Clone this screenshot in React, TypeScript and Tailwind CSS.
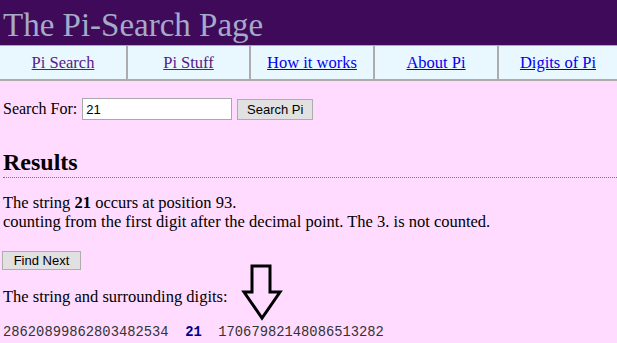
const navLinks = [
  { label: 'Pi Search', visited: true },
  { label: 'Pi Stuff', visited: true },
  { label: 'How it works', visited: false },
  { label: 'About Pi', visited: false },
  { label: 'Digits of Pi', visited: false },
]

const DownArrow = () => (
  <svg
    className="absolute left-[241px] top-[263px]"
    width="42"
    height="58"
    viewBox="0 0 42 58"
    fill="none"
    stroke="black"
    strokeWidth="3"
    strokeLinejoin="miter"
  >
    <path d="M11 3 H29 V29 H39 L21 55 L3 29 H11 Z" />
  </svg>
)

export default function App() {
  return (
    <div className="relative min-h-screen bg-[#ffdcff] font-['Liberation_Serif',serif] text-black">
      <h1 className="h-[45px] bg-[#3f0a59] pl-[3px] pt-[9px] text-[33px] leading-[32px] text-[#a3abc9]">
        The Pi-Search Page
      </h1>

      <nav className="grid h-[36px] grid-cols-[126px_123px_124px_124px_1fr] border-t border-b-2 border-[#acacac] bg-[#e9f7fe]">
        {navLinks.map((link, idx) => (
          <div
            key={link.label}
            className={`flex items-center justify-center pt-[1px] ${idx > 0 ? 'border-l-2 border-[#acacac]' : ''}`}
          >
            <a
              href="#"
              className={`text-[16.5px] underline ${link.visited ? 'text-[#551a8b]' : 'text-[#0000ee]'}`}
            >
              {link.label}
            </a>
          </div>
        ))}
      </nav>

      <div className="pl-[3px]">
        <div className="mt-[17px] flex h-[22px] items-center gap-[5px] text-[16px]">
          <span>Search For:</span>
          <input
            defaultValue="21"
            className="h-[22px] w-[150px] border border-[#a9a9a9] bg-white px-[3px] font-['Liberation_Sans',sans-serif] text-[13px] outline-none"
          />
          <button className="h-[21px] w-[76px] border border-[#adadad] bg-[#e1e1e1] font-['Liberation_Sans',sans-serif] text-[13px] leading-none">
            Search Pi
          </button>
        </div>

        <h2 className="mt-[28px] border-b border-dotted border-[#ff3a3a] pb-[1px] text-[24px] font-bold leading-[28px]">
          Results
        </h2>

        <p className="mt-[15px] text-[16.5px] leading-[19px]">
          The string <b>21</b> occurs at position 93.
          <br />
          counting from the first digit after the decimal point. The 3. is not counted.
        </p>

        <button className="ml-[-1px] mt-[20px] h-[19px] w-[79px] border border-[#adadad] bg-[#e1e1e1] font-['Liberation_Sans',sans-serif] text-[13px] leading-none">
          Find Next
        </button>

        <p className="mt-[15px] text-[16.5px] leading-[19px]">The string and surrounding digits:</p>

        <div className="mt-[19px] whitespace-pre font-['Liberation_Mono',monospace] text-[13.8px] leading-[16px] text-[#333]">
          {'28620899862803482534  '}
          <b className="text-[#00008b]">21</b>
          {'  17067982148086513282'}
        </div>
      </div>

      <DownArrow />
    </div>
  )
}
